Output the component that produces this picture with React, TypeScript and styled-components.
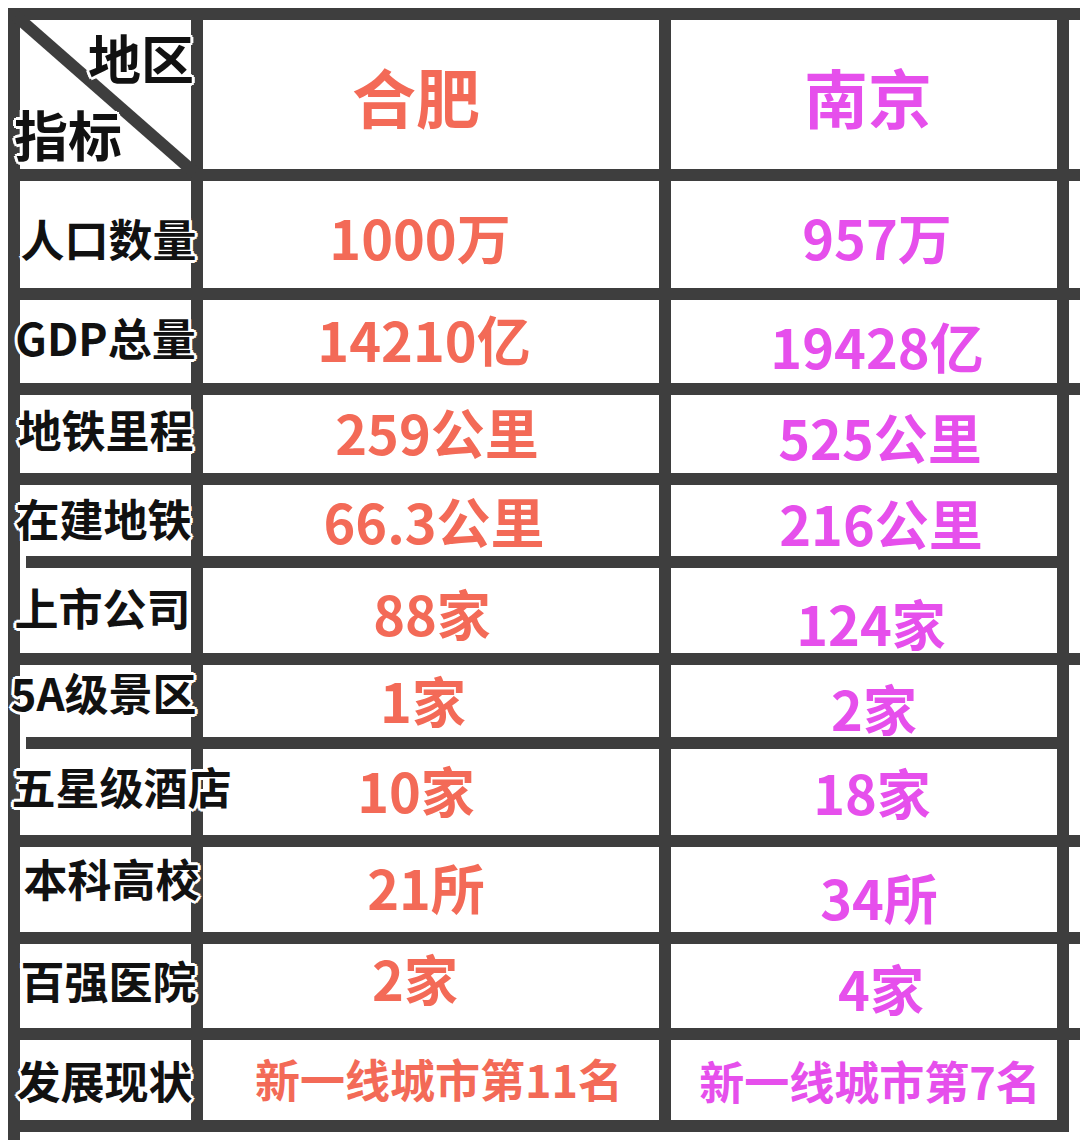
import styled, { createGlobalStyle } from 'styled-components';

const LINE = '#3e3e3e';
const HEFEI = '#f36a57';
const NANJING = '#e64fec';

const GlobalStyle = createGlobalStyle`
  html, body {
    margin: 0;
    padding: 0;
    background: #fff;
  }
  body {
    width: 1080px;
    height: 1140px;
    overflow: hidden;
    font-family: "Noto Sans CJK SC", "Noto Sans", sans-serif;
  }
`;

type Offset = [number, number];

interface Row {
  label: string;
  labelAt: Offset;
  hefei: string;
  hefeiAt: Offset;
  nanjing: string;
  nanjingAt: Offset;
  height: number;
  small?: boolean;
  notch?: boolean;
}

const ROWS: Row[] = [
  { label: '人口数量', labelAt: [3, 3], hefei: '1000万', hefeiAt: [-11, 2], nanjing: '957万', nanjingAt: [13, 2], height: 107 },
  { label: 'GDP总量', labelAt: [0, -5], hefei: '14210亿', hefeiAt: [-7, -3], nanjing: '19428亿', nanjingAt: [13, 4], height: 83 },
  { label: '地铁里程', labelAt: [0, -5], hefei: '259公里', hefeiAt: [6, -2], nanjing: '525公里', nanjingAt: [16, 3], height: 78 },
  { label: '在建地铁', labelAt: [-2, -3], hefei: '66.3公里', hefeiAt: [3, 0], nanjing: '216公里', nanjingAt: [17, 2], height: 71, notch: true },
  { label: '上市公司', labelAt: [-3, -4], hefei: '88家', hefeiAt: [1, 2], nanjing: '124家', nanjingAt: [7, 12], height: 85 },
  { label: '5A级景区', labelAt: [-2, -9], hefei: '1家', hefeiAt: [-8, -1], nanjing: '2家', nanjingAt: [10, 7], height: 72, notch: true },
  { label: '五星级酒店', labelAt: [16, -6], hefei: '10家', hefeiAt: [-15, -2], nanjing: '18家', nanjingAt: [8, 0], height: 86 },
  { label: '本科高校', labelAt: [6, -12], hefei: '21所', hefeiAt: [-5, -3], nanjing: '34所', nanjingAt: [15, 7], height: 85 },
  { label: '百强医院', labelAt: [3, -6], hefei: '2家', hefeiAt: [-16, -8], nanjing: '4家', nanjingAt: [17, 2], height: 84 },
  { label: '发展现状', labelAt: [-1, 0], hefei: '新一线城市第11名', hefeiAt: [8, -2], nanjing: '新一线城市第7名', nanjingAt: [6, 0], height: 80, small: true },
];

// the narrow strip past the last column: some lines stop at the divider there
const EDGE_CELLS: { row: number; span: number; last?: boolean }[] = [
  { row: 1, span: 1 },
  { row: 2, span: 1 },
  { row: 3, span: 1 },
  { row: 4, span: 3 },
  { row: 7, span: 2 },
  { row: 9, span: 1 },
  { row: 10, span: 1 },
  { row: 11, span: 1, last: true },
];

const halo = `3px 0 #fff, -3px 0 #fff, 0 3px #fff, 0 -3px #fff,
  2px 2px #fff, -2px 2px #fff, 2px -2px #fff, -2px -2px #fff`;

export default function App() {
  return (
    <>
      <GlobalStyle />
      <S.Table $rows={ROWS.map(r => r.height)}>
        <S.Corner>
          <S.Diagonal viewBox="0 0 171 149">
            <line x1="-4" y1="-4" x2="175" y2="153" stroke={LINE} strokeWidth="12" />
          </S.Diagonal>
          <S.CornerTop>地区</S.CornerTop>
          <S.CornerBottom>指标</S.CornerBottom>
        </S.Corner>
        <S.Cell $col={2}>
          <S.Value $color={HEFEI} $size={64} $at={[-15, 0]}>合肥</S.Value>
        </S.Cell>
        <S.Cell $col={3}>
          <S.Value $color={NANJING} $size={64} $at={[4, 0]}>南京</S.Value>
        </S.Cell>
        {ROWS.map(row => (
          <S.RowGroup key={row.label}>
            <S.LabelCell $notch={row.notch}>
              <S.Label $at={row.labelAt}>{row.label}</S.Label>
            </S.LabelCell>
            <S.Cell $col={2}>
              <S.Value $color={HEFEI} $size={row.small ? 45 : 54} $at={row.hefeiAt}>
                {row.hefei}
              </S.Value>
            </S.Cell>
            <S.Cell $col={3}>
              <S.Value $color={NANJING} $size={row.small ? 45 : 54} $at={row.nanjingAt}>
                {row.nanjing}
              </S.Value>
            </S.Cell>
          </S.RowGroup>
        ))}
        {EDGE_CELLS.map(c => (
          <S.EdgeCell key={c.row} $row={c.row} $span={c.span} $last={c.last} />
        ))}
      </S.Table>
    </>
  );
}

const S = {
  Table: styled.div<{ $rows: number[] }>`
    position: relative;
    display: grid;
    grid-template-columns: 171px 456px 386px 40px;
    grid-template-rows: 149px ${p => p.$rows.map(h => `${h}px`).join(' ')};
    gap: 12px;
    width: max-content;
    margin: 8px 0 0 8px;
    padding: 12px 0 12px 12px;
    background: ${LINE};

    /* the left border runs on past the bottom line */
    &::after {
      content: '';
      position: absolute;
      left: 0;
      top: 100%;
      width: 12px;
      height: 20px;
      background: ${LINE};
    }
  `,

  RowGroup: styled.div`
    display: contents;
  `,

  Corner: styled.div`
    position: relative;
    grid-column: 1;
    display: flex;
    flex-direction: column;
    justify-content: space-between;
    padding: 11px 0 8px;
    background: #fff;
    font-weight: 700;
    color: #111;
    line-height: 1;
    z-index: 1;
  `,

  Diagonal: styled.svg`
    position: absolute;
    inset: 0;
    width: 100%;
    height: 100%;
    overflow: visible;
  `,

  CornerTop: styled.span`
    position: relative;
    align-self: flex-end;
    margin-right: -3px;
    font-size: 53px;
    text-shadow: ${halo};
  `,

  CornerBottom: styled.span`
    position: relative;
    align-self: flex-start;
    margin-left: -6px;
    font-size: 54px;
    text-shadow: ${halo};
  `,

  LabelCell: styled.div<{ $notch?: boolean }>`
    position: relative;
    grid-column: 1;
    display: flex;
    align-items: center;
    justify-content: center;
    background: #fff;
    z-index: 1;

    /* a few lines stop short of the left border */
    &::after {
      content: '';
      display: ${p => (p.$notch ? 'block' : 'none')};
      position: absolute;
      left: 0;
      top: 100%;
      width: 6px;
      height: 12px;
      background: #fff;
    }
  `,

  Label: styled.span<{ $at: Offset }>`
    white-space: nowrap;
    font-size: 44px;
    font-weight: 700;
    line-height: 1;
    color: #111;
    text-shadow: ${halo};
    transform: translate(${p => p.$at[0]}px, ${p => p.$at[1]}px);
  `,

  Cell: styled.div<{ $col: number }>`
    grid-column: ${p => p.$col};
    display: flex;
    align-items: center;
    justify-content: center;
    background: #fff;
  `,

  Value: styled.span<{ $color: string; $size: number; $at: Offset }>`
    white-space: nowrap;
    font-size: ${p => p.$size}px;
    font-weight: 700;
    line-height: 1;
    color: ${p => p.$color};
    transform: translate(${p => p.$at[0]}px, ${p => p.$at[1]}px);
  `,

  EdgeCell: styled.div<{ $row: number; $span: number; $last?: boolean }>`
    grid-column: 4;
    grid-row: ${p => p.$row} / span ${p => p.$span};
    background: #fff;
    margin-bottom: ${p => (p.$last ? '-12px' : '0')};
  `,
};
